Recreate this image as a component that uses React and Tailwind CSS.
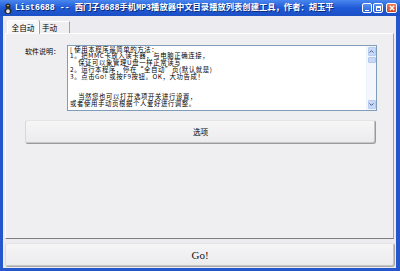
export default function App() {
  const cjk = { fontFamily: '"Noto Sans CJK SC", "Noto Sans", sans-serif' };
  const lines = [
    "| 使用本程序最简单的方法：",
    "1。把MMC卡放入读卡器，与电脑正确连接，",
    "    保证可以象管理U盘一样正常读写",
    "2。运行本程序，停在“全自动”页(默认就是)",
    "3。点击Go! 或按F9按钮。OK，大功告成！",
    "",
    "",
    "    当然您也可以打开选项开关进行设置，",
    "或者使用手动页根据个人爱好进行调整。",
  ];
  return (
    <div className="w-[400px] h-[271px] flex flex-col bg-[#2556cc] overflow-hidden select-none">
      {/* title bar */}
      <div className="h-[16px] flex items-center pl-[3px] pr-[3px] bg-gradient-to-b from-[#4a86ee] via-[#1f5ad6] to-[#1c4fc4]">
        <svg width="10" height="11" viewBox="0 0 10 11" className="shrink-0">
          <ellipse cx="5" cy="3" rx="2.6" ry="2.6" fill="#2a2a2a" />
          <ellipse cx="5" cy="8" rx="3.6" ry="3" fill="#2a2a2a" />
          <ellipse cx="5" cy="8.2" rx="1.8" ry="2" fill="#e8e8e8" />
          <rect x="4" y="2.2" width="2" height="1" fill="#f0c040" />
        </svg>
        <div
          className="ml-[2px] text-[8.3px] leading-none font-bold text-white whitespace-nowrap [text-shadow:1px_1px_0_#0a2a7a]"
          style={{ fontFamily: '"Liberation Mono", "Noto Sans CJK SC", monospace' }}
        >
          List6688 -- 西门子6688手机MP3播放器中文目录播放列表创建工具，作者：胡玉平
        </div>
        <div className="flex-1" />
        <div className="flex gap-[1px] items-center">
          <div className="w-[10px] h-[10px] rounded-[2px] border border-white bg-gradient-to-b from-[#5a92f4] to-[#2a64dc] flex items-end justify-center pb-[1px]">
            <div className="w-[4px] h-[1.5px] bg-white" />
          </div>
          <div className="w-[10px] h-[10px] rounded-[2px] border border-white bg-gradient-to-b from-[#5a92f4] to-[#2a64dc] flex items-center justify-center">
            <div className="w-[5px] h-[5px] border border-white border-t-2" />
          </div>
          <div className="ml-[2px] w-[11px] h-[10px] rounded-[2px] border border-white bg-gradient-to-b from-[#ee7a5a] to-[#d2431f] flex items-center justify-center">
            <svg width="6" height="6" viewBox="0 0 6 6">
              <path d="M0.8 0.8 L5.2 5.2 M5.2 0.8 L0.8 5.2" stroke="white" strokeWidth="1.4" />
            </svg>
          </div>
        </div>
      </div>

      {/* body */}
      <div className="flex-1 ml-[3px] mr-[4px] mb-[3px] bg-[#ecebef] flex flex-col pl-[2px] pr-[2px] pt-[3px] pb-[1px]" style={cjk}>
        {/* tabs */}
        <div className="flex items-end h-[14px] pl-[2px]">
          <div className="h-[14px] w-[32px] bg-[#f7f7f8] border-t border-l border-r border-[#ffffff] shadow-[1px_0_0_#a0a0a0] rounded-t-[2px] flex items-center justify-center text-[7.6px] text-black relative top-[1px] z-10">
            全自动
          </div>
          <div className="h-[12px] w-[31px] bg-[#efeff1] border-t border-r border-[#a0a0a0] border-t-white flex items-center justify-start pl-[3px] text-[7.6px] text-black">
            手动
          </div>
        </div>
        {/* panel */}
        <div className="flex-1 bg-[#efeff2] border-t border-l border-white border-r border-r-[#a0a0a0] border-b border-b-[#7f7f7f] flex flex-col pt-[11px] pl-[19px] pr-[16px]">
          <div className="flex items-start">
            <div className="w-[42px] text-[7px] leading-none text-black pt-[3px] whitespace-nowrap">软件说明：</div>
            <div className="flex-1 h-[66px] bg-white border border-[#7f9db9] flex">
              <div className="flex-1 min-w-0 pl-[2px] pt-[0.5px] text-[6.4px] tracking-[0.6px] text-black overflow-hidden flex flex-col">
                {lines.map((l, i) => (
                  <div key={i} className="h-[6.8px] leading-[6.8px] whitespace-pre">{l}</div>
                ))}
              </div>
              <div className="w-[10px] shrink-0 bg-[#f3f6fd] flex flex-col border-l border-[#eef2fb]">
                <div className="h-[9px] mt-[1px] mx-[0.5px] rounded-[1px] bg-[#c8d8f8] border border-[#b8ccf0] flex items-center justify-center">
                  <svg width="5" height="3" viewBox="0 0 5 3"><path d="M0.5 2.6 L2.5 0.6 L4.5 2.6" stroke="#4d6185" strokeWidth="1" fill="none" /></svg>
                </div>
                <div className="h-[6px] mt-[1px] mx-[0.5px] rounded-[1px] bg-[#c9d8f7] border border-[#b3c7ef]" />
                <div className="flex-1" />
                <div className="h-[9px] mb-[1px] mx-[0.5px] rounded-[1px] bg-[#c8d8f8] border border-[#b8ccf0] flex items-center justify-center">
                  <svg width="5" height="3" viewBox="0 0 5 3"><path d="M0.5 0.4 L2.5 2.4 L4.5 0.4" stroke="#4d6185" strokeWidth="1" fill="none" /></svg>
                </div>
              </div>
            </div>
          </div>
          <div className="mt-[9px] h-[24px] rounded-[3px] border border-[#9a9a9a] border-l-[#d8d8d8] border-t-[#e4e4e4] bg-gradient-to-b from-[#f6f6f7] to-[#ebebee] shadow-[inset_-1px_-1px_0_#c6c6c6] flex items-center justify-center text-[7.6px] text-black mr-[1px]">
            选项
          </div>
        </div>
        {/* Go button */}
        <div className="mt-[4px] h-[24px] rounded-[3px] border border-[#a8a8a8] border-l-[#dcdcdc] border-t-[#e4e4e4] bg-gradient-to-b from-[#f5f5f6] to-[#ebebee] shadow-[inset_-1px_-1px_0_#c6c6c6] flex items-center justify-center text-[11px] text-[#111] mr-[-1px]" style={{ fontFamily: '"Liberation Serif", serif' }}>
          Go!
        </div>
      </div>
    </div>
  );
}
